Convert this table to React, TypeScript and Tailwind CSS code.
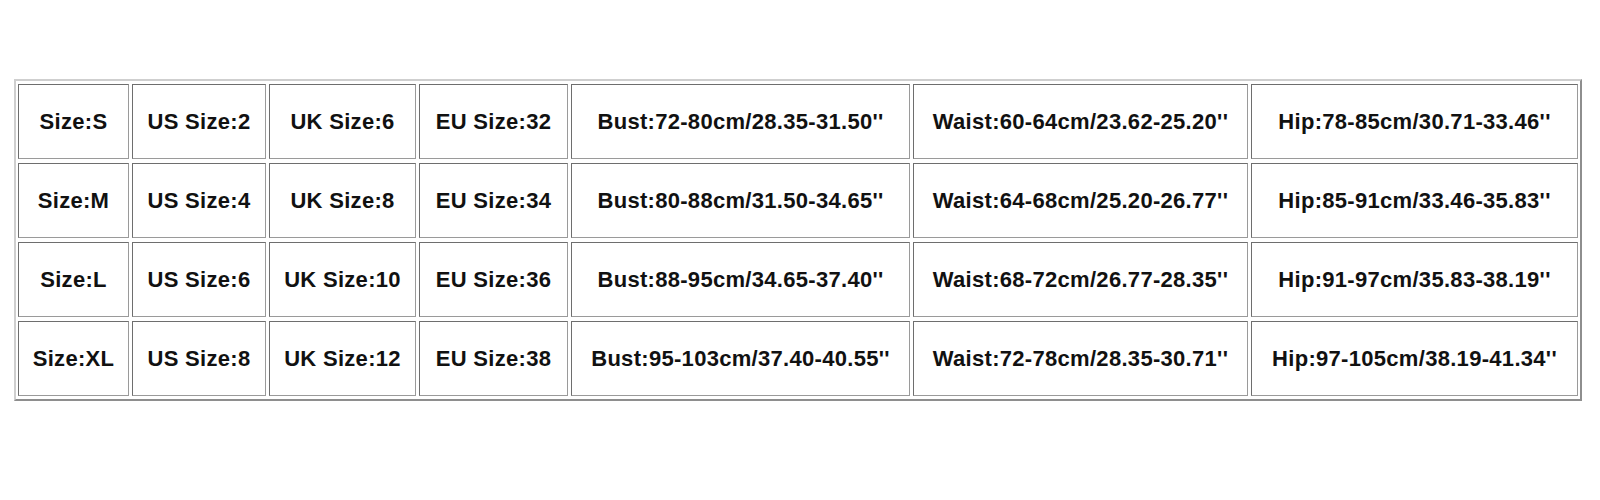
import React from "react"

const rows = [
  ["Size:S", "US Size:2", "UK Size:6", "EU Size:32", "Bust:72-80cm/28.35-31.50''", "Waist:60-64cm/23.62-25.20''", "Hip:78-85cm/30.71-33.46''"],
  ["Size:M", "US Size:4", "UK Size:8", "EU Size:34", "Bust:80-88cm/31.50-34.65''", "Waist:64-68cm/25.20-26.77''", "Hip:85-91cm/33.46-35.83''"],
  ["Size:L", "US Size:6", "UK Size:10", "EU Size:36", "Bust:88-95cm/34.65-37.40''", "Waist:68-72cm/26.77-28.35''", "Hip:91-97cm/35.83-38.19''"],
  ["Size:XL", "US Size:8", "UK Size:12", "EU Size:38", "Bust:95-103cm/37.40-40.55''", "Waist:72-78cm/28.35-30.71''", "Hip:97-105cm/38.19-41.34''"],
]

const App = () => {
  return (
    <div className="w-[1600px] h-[500px] bg-white pt-[79px] pl-[14px]">
      <div className="inline-block border-2 border-t-[#cfcfcf] border-l-[#cfcfcf] border-b-[#8e8e8e] border-r-[#8e8e8e] px-[2px] py-[3px]">
        <div className="grid grid-cols-[111px_134px_147px_149px_339px_335px_327px] auto-rows-[75px] gap-x-[3px] gap-y-[4px]">
          {rows.flat().map((text, i) => (
            <div
              key={i}
              className="flex items-center justify-center border border-t-[#6e6e6e] border-l-[#6e6e6e] border-b-[#9a9a9a] border-r-[#9a9a9a] font-['Liberation_Sans',Arial,sans-serif] font-bold text-[22px] tracking-[0.3px] text-[#111] whitespace-nowrap"
            >
              {text}
            </div>
          ))}
        </div>
      </div>
    </div>
  )
}

export default App
